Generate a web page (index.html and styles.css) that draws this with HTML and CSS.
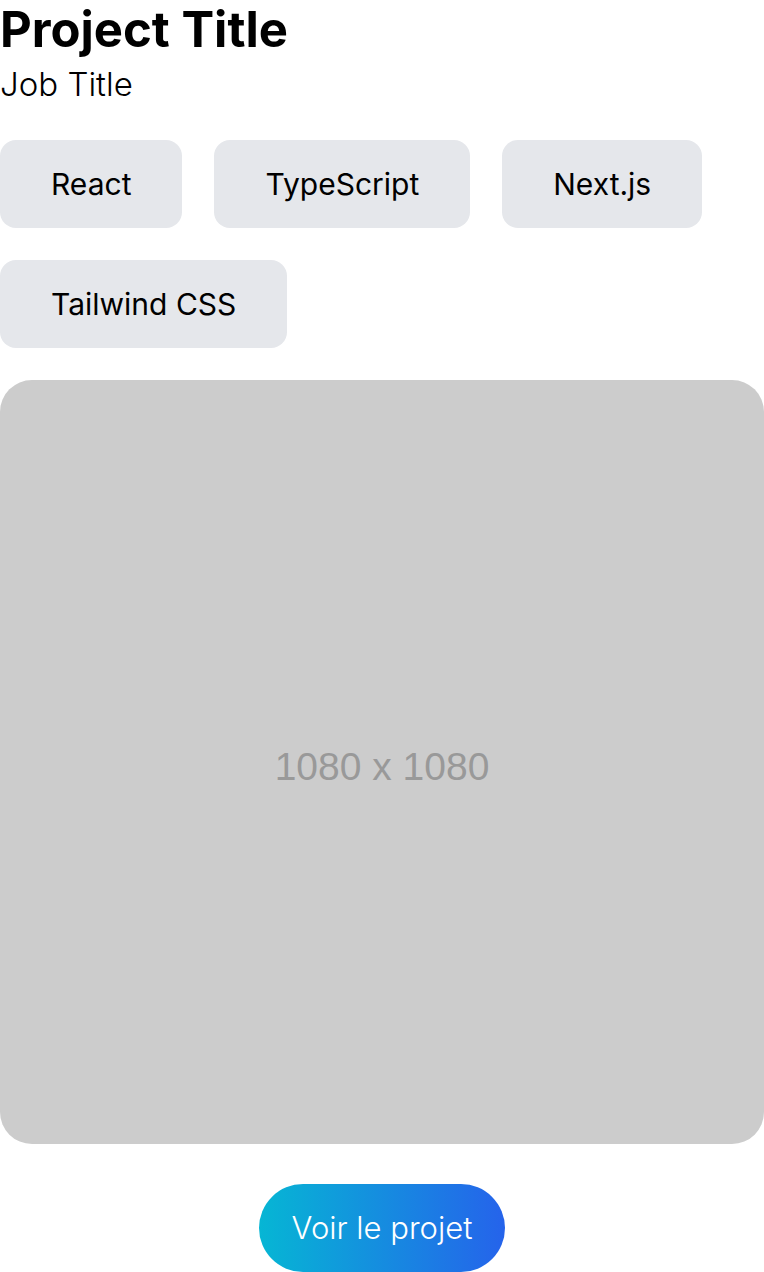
FILE: index.html
```html
<!DOCTYPE html>
<html lang="fr">
<head>
<meta charset="utf-8">
<title>Project</title>
<link rel="stylesheet" href="styles.css">
</head>
<body>
<main class="project">
  <header class="project-head">
    <h1 class="project-title">Project Title</h1>
    <p class="job-title">Job Title</p>
  </header>
  <ul class="tags">
    <li class="tag">React</li>
    <li class="tag">TypeScript</li>
    <li class="tag">Next.js</li>
    <li class="tag">Tailwind CSS</li>
  </ul>
  <div class="preview"><span class="preview-label">1080 x 1080</span></div>
  <div class="actions">
    <a class="cta" href="#">Voir le projet</a>
  </div>
</main>
</body>
</html>
```
FILE: styles.css
```css
* { box-sizing: border-box; }
html, body { margin: 0; padding: 0; background: #fff; }
body { font-family: Inter, "Noto Sans", sans-serif; color: #000; }
.project { display: flex; flex-direction: column; }
.project-head { display: flex; flex-direction: column; }
.project-title { margin: 0; font-size: 49px; line-height: 60px; font-weight: 700; }
.job-title { margin: 0; font-size: 33px; line-height: 48px; font-weight: 300; }
.tags { list-style: none; margin: 32px 0 0; padding: 0; display: flex; flex-wrap: wrap; gap: 32px; }
.tag { background: #e5e7eb; border-radius: 16px; padding: 24px 51px; font-size: 30px; line-height: 40px; font-weight: 400; }
.preview { margin-top: 32px; width: 100%; aspect-ratio: 1 / 1; background: #cccccc; border-radius: 32px; display: flex; align-items: center; justify-content: center; }
.preview-label { font-family: "Liberation Sans", Arial, sans-serif; font-size: 39px; color: #999999; padding-top: 10px; }
.actions { margin-top: 40px; display: flex; justify-content: center; }
.cta { display: inline-block; padding: 24px 33px; border-radius: 9999px; background: linear-gradient(to right, #06b6d4, #2563eb); color: #fff; text-decoration: none; font-size: 31px; line-height: 40px; font-weight: 300; }
```
